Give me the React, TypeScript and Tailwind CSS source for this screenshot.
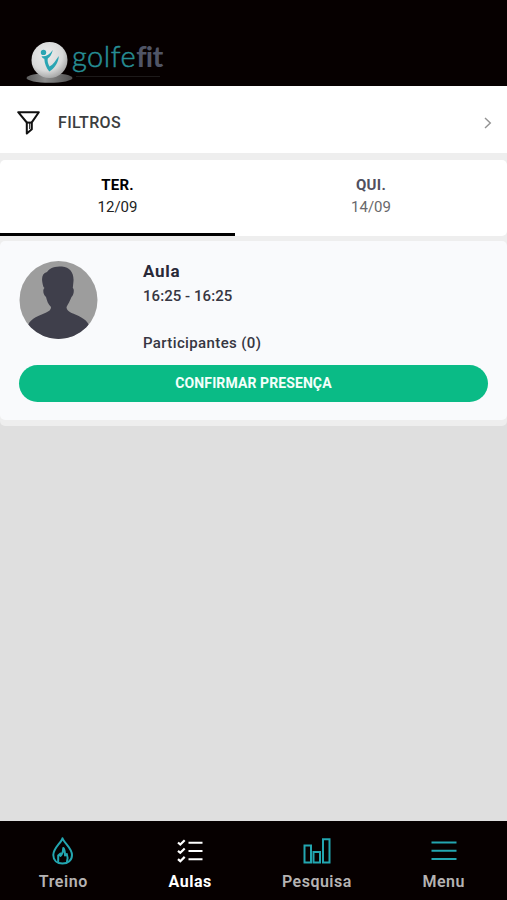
import type { ReactNode } from "react";

function Logo() {
  return (
    <div className="flex h-[46px] items-start">
      <svg width="51" height="46" viewBox="0 0 51 46" className="shrink-0">
        <defs>
          <radialGradient id="ball" cx="0.42" cy="0.36" r="0.68">
            <stop offset="0" stopColor="#ececec" />
            <stop offset="0.65" stopColor="#d8d9d9" />
            <stop offset="1" stopColor="#a0a0a0" />
          </radialGradient>
          <linearGradient id="base" x1="0" y1="0" x2="1" y2="0">
            <stop offset="0" stopColor="#5c5c5c" />
            <stop offset="0.4" stopColor="#8c8c8c" />
            <stop offset="1" stopColor="#505050" />
          </linearGradient>
        </defs>
        <ellipse cx="24.5" cy="38" rx="23" ry="4.8" fill="url(#base)" />
        <circle cx="24.5" cy="20" r="18" fill="url(#ball)" />
        <circle cx="18.5" cy="12.4" r="2.7" fill="#2aa5b3" />
        <path d="M16.5 16.2C20.5 17 24.500 14.500 27.800 10C26.800 14.500 24.800 17 22.800 18.600C22.300 20.800 22.800 23.500 24.500 26.500C28.500 24.500 30.500 20.500 33.800 16C33.500 22.500 29.500 28.500 24.300 31.500C21.300 28 19.500 23.500 19.300 18.800C18.200 18.400 17.200 17.500 16.500 16.200Z" fill="#2aa5b3" />
      </svg>
      <div className="-ml-[4px] flex flex-col">
        <div className="-mt-[3px] h-[38px] whitespace-nowrap font-['Lato',sans-serif] text-[29px] leading-[38px]">
          <span className="font-light tracking-[0.5px] text-[#278f96] [-webkit-text-stroke:0.5px_#278f96]">golfe</span>
          <span className="font-bold tracking-[-0.7px] text-[#505566]">fit</span>
        </div>
        <div className="ml-1 mt-px h-px w-[84px] bg-[#1d1a1a]" />
      </div>
    </div>
  );
}

function FlameIcon() {
  return (
    <svg width="24" height="28" viewBox="0 0 24 28" fill="none" stroke="#23a6b0" strokeWidth="2" strokeLinejoin="round" strokeLinecap="round">
      <path d="M11.500 1.200C10.200 6 2.300 11 2.300 18C2.300 23.200 6 26.500 11.500 26.500S21 23.200 21 18C21 11 13 6 11.500 1.200Z" />
      <path d="M7.200 24.500V18.500L9.500 16.500V19C11.500 16.500 12.500 14 12.300 11C14 13 14 16 14 18.500L15.800 17C16.800 19.500 16.800 22 16 24.500" />
    </svg>
  );
}

function ChecklistIcon() {
  return (
    <svg width="26" height="24" viewBox="0 0 26 24" fill="none" stroke="#fff" strokeWidth="2.2">
      <path d="M11.5 3.8H25.500M11.5 12H25.500M11.5 20.200H25.500" strokeWidth="2" />
      <path d="M1 3.500l2.300 2L7.700 1.200M1 11.800l2.300 2 4.400-4.300M1 20.200l2.300 2 4.400-4.300" />
    </svg>
  );
}

function BarsIcon() {
  return (
    <svg width="28" height="26" viewBox="0 0 28 26" fill="none" stroke="#23a6b0" strokeWidth="2">
      <path d="M1.500 7.500h6.500v17H1.500zM10.500 14h6.500v10.500h-6.500zM20 1.300h6.500v23.200H20z" />
    </svg>
  );
}

function MenuIcon() {
  return (
    <svg width="26" height="22" viewBox="0 0 26 22" stroke="#23a6b0" strokeWidth="2">
      <path d="M0.500 2.500h25M0.500 10.800h25M0.500 19h25" />
    </svg>
  );
}

function NavItem({ icon, label, active, spacing }: { icon: ReactNode; label: string; active?: boolean; spacing: string }) {
  return (
    <div className="flex flex-1 flex-col items-center">
      <div className="flex h-[30px] items-center">{icon}</div>
      <div className={`mt-[6px] text-[16px] leading-5 ${spacing} ${active ? "font-bold text-white" : "font-semibold text-[#b5b3b3]"}`}>{label}</div>
    </div>
  );
}

export default function App() {
  return (
    <div className="flex h-[900px] w-full flex-col overflow-hidden bg-[#dfdfdf] font-['Roboto',sans-serif]">
      <header className="h-[86px] shrink-0 bg-[#060000] pl-[25px] pt-[40px]">
        <Logo />
      </header>

      <section className="flex h-[67px] shrink-0 items-center bg-white pl-[17px] pr-[14px] pt-[7px]">
        <svg width="24" height="24" viewBox="0 0 24 24" fill="none" stroke="#111" strokeWidth="2" strokeLinejoin="round">
          <path d="M1.200 1.200h20.600l-7 10.200v6.800l-5 4.300v-11z" />
          <path d="M9.300 11.600h5.500" />
          <path d="M12.700 12v6" strokeWidth="1" />
        </svg>
        <span className="ml-[17px] text-[16px] font-medium leading-6 tracking-[0.35px] text-[#3c3e40]">FILTROS</span>
        <svg className="ml-auto" width="10" height="14" viewBox="0 0 10 14" fill="none" stroke="#929292" strokeWidth="1.4">
          <path d="M2 2l5.300 5L2 12" />
        </svg>
      </section>

      <div className="shrink-0 bg-[#eeeeee] pt-[7px]">
        <div className="flex h-[76px] rounded-[5px] bg-white">
          <div className="flex w-[235px] flex-col items-center border-b-[3px] border-black pt-[14px] text-black">
            <span className="text-[15px] font-bold leading-[22px] tracking-[0.2px]">TER.</span>
            <span className="text-[15px] leading-[22px] text-[#222]">12/09</span>
          </div>
          <div className="flex flex-1 flex-col items-center pt-[14px]">
            <span className="text-[15px] font-bold leading-[22px] tracking-[0.3px] text-[#50505f]">QUI.</span>
            <span className="text-[15px] leading-[22px] text-[#68686b]">14/09</span>
          </div>
        </div>
        <div className="h-[5px]" />
      </div>

      <div className="h-[185px] shrink-0 rounded-b-[5px] bg-[#eeeeee]">
        <article className="h-[179px] rounded-[5px] bg-[#f9fafc] px-[19px] pt-[20px]">
          <div className="flex h-[104px]">
            <svg width="79" height="79" viewBox="0 0 79 79" className="shrink-0">
              <defs>
                <clipPath id="avatar"><circle cx="39.5" cy="39" r="39" /></clipPath>
              </defs>
              <g clipPath="url(#avatar)">
                <rect width="79" height="79" fill="#9d9d9d" />
                <path fill="#3f3f4b" d="M24.500 26C22 18 22.500 12.500 28 11C31 6.500 36 5.500 43 5.500C51 6 55 12 54.500 20L53.800 27C55.800 28 54.500 35 52.500 36C51 40 49 43 47.500 46C47.500 49 50 51 54 52.500C62 56 69 59 70.500 66L72 80H7L8.500 66C10 59 17 55.500 25 52.500C30 50.500 32 49 32 46C29 43 28 40 27 36C24 34 23.500 28 25.500 27Z" />
              </g>
            </svg>
            <div className="ml-[45px] flex flex-col text-[#363642]">
              <span className="text-[17px] font-bold leading-5 tracking-[0.7px] text-[#292938]">Aula</span>
              <span className="mt-[5px] text-[15px] font-medium leading-5 tracking-[0.05px]">16:25 - 16:25</span>
              <span className="mt-[27px] text-[15px] font-medium leading-5 tracking-[0.37px]">Participantes (0)</span>
            </div>
          </div>
          <button className="flex h-[37px] w-full items-center justify-center rounded-full bg-[#0abb86] text-[14px] font-bold tracking-[0.1px] text-[#f4fffb]">CONFIRMAR PRESENÇA</button>
        </article>
      </div>

      <nav className="mt-auto flex h-[79px] shrink-0 bg-[#060000] pt-[15px]">
        <NavItem icon={<FlameIcon />} label="Treino" spacing="tracking-[0.6px]" />
        <NavItem icon={<ChecklistIcon />} label="Aulas" active spacing="tracking-[0.5px]" />
        <NavItem icon={<BarsIcon />} label="Pesquisa" spacing="tracking-[0.5px]" />
        <NavItem icon={<MenuIcon />} label="Menu" spacing="tracking-[0.5px]" />
      </nav>
    </div>
  );
}
